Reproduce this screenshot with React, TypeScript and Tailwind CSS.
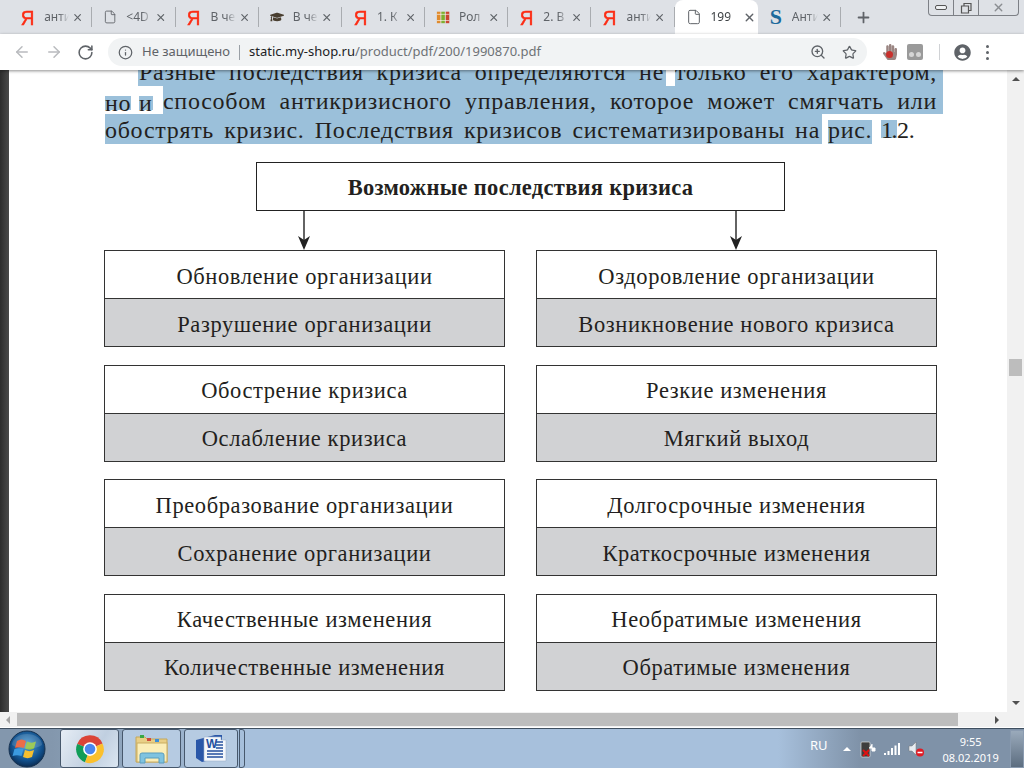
import { ArrowLeft, ArrowRight, RotateCw, Info, ZoomIn, Star, File, X, Plus } from 'lucide-react'
import { FaGraduationCap, FaUserCircle, FaHandPaper } from 'react-icons/fa'

const tabs = [
  { icon: 'ya', label: 'анти' },
  { icon: 'doc', label: '<4D' },
  { icon: 'ya', label: 'В чем' },
  { icon: 'cap', label: 'В чем' },
  { icon: 'ya', label: '1. К' },
  { icon: 'books', label: 'Рол' },
  { icon: 'ya', label: '2. В' },
  { icon: 'ya', label: 'анти' },
  { icon: 'doc', label: '199', active: true },
  { icon: 's', label: 'Анти' },
]

const rows = [
  ['Обновление организации', 'Разрушение организации', 'Оздоровление организации', 'Возникновение нового кризиса'],
  ['Обострение кризиса', 'Ослабление кризиса', 'Резкие изменения', 'Мягкий выход'],
  ['Преобразование организации', 'Сохранение организации', 'Долгосрочные изменения', 'Краткосрочные изменения'],
  ['Качественные изменения', 'Количественные изменения', 'Необратимые изменения', 'Обратимые изменения'],
]

function TabIcon({ kind }: { kind: string }) {
  if (kind === 'ya') return <span className="w-4 text-center text-[21px] leading-none text-[#fc2c14] scale-x-90 [-webkit-text-stroke:0.5px_#fc2c14] [font-family:'Liberation_Sans',sans-serif]">Я</span>
  if (kind === 'doc') return <File className="w-4 h-4 text-[#5f6368]" strokeWidth={1.5} />
  if (kind === 'cap') return <FaGraduationCap className="w-4 h-4 text-[#4a3f30]" />
  if (kind === 's') return <span className="w-4 text-center text-[22px] leading-none font-bold text-[#1d6a9c] [font-family:'Liberation_Serif',serif]">S</span>
  return (
    <svg viewBox="0 0 16 16" className="w-4 h-4">
      <rect x="1" y="2" width="4" height="13" fill="#e08a2c" />
      <rect x="6" y="2" width="4" height="13" fill="#7fae2e" />
      <rect x="11" y="2" width="4" height="13" fill="#c9452f" />
      <path d="M1 5h14M1 12h14" stroke="#fff" strokeOpacity="0.7" />
    </svg>
  )
}

function Tab({ icon, label, active }: { icon: string; label: string; active?: boolean }) {
  return (
    <div className={`w-[83.2px] h-[34px] flex items-center pl-[11px] ${active ? 'bg-white rounded-t-lg text-[#3c4043]' : 'text-[#5f6368]'}`}>
      <TabIcon kind={icon} />
      <span className="ml-[9px] w-[29px] overflow-hidden whitespace-nowrap text-[12px] [mask-image:linear-gradient(to_right,black_60%,transparent)]">{label}</span>
      <X className="w-[13px] h-[13px] ml-[3px] text-[#5f6368]" strokeWidth={2.5} />
      {!active && <div className="ml-[8px] h-[20px] w-px bg-[#a9acb0]" />}
    </div>
  )
}

function Arrow() {
  return (
    <svg viewBox="0 0 12 39" className="w-3 h-[39px]">
      <path d="M6 0V30" stroke="#222" strokeWidth="1.4" />
      <path d="M0 25L6 39L12 25L6 29Z" fill="#222" />
    </svg>
  )
}

function Pair({ top, bottom }: { top: string; bottom: string }) {
  return (
    <div className="w-[401px] border border-[#333] text-[22.5px] tracking-[0.6px] text-[#231f20]">
      <div className="h-[48px] pt-[3px] flex items-center justify-center border-b border-[#333] bg-white">{top}</div>
      <div className="h-[47px] pt-[3px] flex items-center justify-center bg-[#d1d2d4]">{bottom}</div>
    </div>
  )
}

function ChromeLogo() {
  return (
    <svg viewBox="0 0 48 48" className="w-[30px] h-[30px]">
      <path d="M24 24L3.5 16A22 22 0 0 1 44 15Z" fill="#db4437" />
      <path d="M24 24L16 45A22 22 0 0 1 3.5 16Z" fill="#0f9d58" />
      <path d="M24 24L44 15A22 22 0 0 1 16 45Z" fill="#fbc02d" />
      <circle cx="24" cy="24" r="11" fill="#fff" />
      <circle cx="24" cy="24" r="8.5" fill="#4a87ee" />
    </svg>
  )
}

function FolderIcon() {
  return (
    <svg viewBox="0 0 34 30" className="w-[34px] h-[30px]">
      <path d="M1 3h9l2 2h20v23H1Z" fill="#e9cf86" stroke="#c4a75a" />
      <rect x="5" y="1" width="4" height="3" fill="#39a845" />
      <rect x="12" y="4" width="4" height="3" fill="#d04a3a" />
      <rect x="20" y="5" width="4" height="3" fill="#3c8fd9" />
      <rect x="2" y="9" width="30" height="19" fill="#fbeeb8" stroke="#c9ad62" />
      <path d="M5 29V21a2 2 0 0 1 2-2h20a2 2 0 0 1 2 2v8h-5v-5H10v5Z" fill="#7fc3e0" stroke="#5a9dbd" />
    </svg>
  )
}

function WordIcon() {
  return (
    <svg viewBox="0 0 32 30" className="w-8 h-[30px]">
      <path d="M1 6L20 1h7v22l-20 5L1 24Z" fill="#2a57a8" />
      <path d="M9 3h17v3h5v21H9Z" fill="#f4f7fb" stroke="#9fb3cf" strokeWidth="0.6" />
      <text x="11" y="14" fontSize="12" fontWeight="700" fill="#24509e" fontFamily="Liberation Sans, sans-serif">W</text>
      <path d="M21 8h7M21 11h7M21 14h7M12 17h16M12 20h16M12 23h16" stroke="#24509e" strokeWidth="1.6" />
    </svg>
  )
}

function StartOrb() {
  return (
    <svg viewBox="0 0 38 38" className="w-[38px] h-[38px]">
      <defs>
        <radialGradient id="orb" cx="50%" cy="40%" r="60%">
          <stop offset="0%" stopColor="#4fa0d8" />
          <stop offset="70%" stopColor="#11508c" />
          <stop offset="100%" stopColor="#0b2c52" />
        </radialGradient>
      </defs>
      <circle cx="19" cy="19" r="18" fill="url(#orb)" stroke="#16314f" />
      <path d="M9 11c3-2 6-2 9 0l-2 7c-3-1-6-1-9 0Z" fill="#e8562c" />
      <path d="M19 11.500c3 1.500 6 1.500 9 0l-2 7c-3 1.500-6 1.500-9 0Z" fill="#8cc13f" />
      <path d="M6.500 19c3-1 6-1 9 0l-2 7c-3-1-6-1-9 0Z" fill="#3b9ae0" />
      <path d="M17 20c3 1.500 6 1.500 9 0l-2 7c-3 1.500-6 1.500-9 0Z" fill="#f6bf2f" />
      <path d="M4 15A15 11 0 0 1 34 15C26 20 12 20 4 15Z" fill="#fff" fillOpacity="0.14" />
    </svg>
  )
}

function TaskButton({ children, width, active }: { children: React.ReactNode; width: string; active?: boolean }) {
  return (
    <div className={`${width} h-[39px] flex items-center justify-center rounded-[3px] border border-[#47586c] ${active ? 'bg-[linear-gradient(120deg,#e6edf5,#c0cfe0_60%,#dbe6f1)]' : 'bg-[#b6cbe2]'}`}>
      {children}
    </div>
  )
}

const serif = "[font-family:'Liberation_Serif',serif]"

export default function App() {
  return (
    <div className="w-[1024px] h-[768px] overflow-hidden flex flex-col bg-white [font-family:'Noto_Sans',sans-serif]">
      {/* tab strip */}
      <div className="h-[34px] bg-[#dee1e6] flex pl-[9px]">
        {tabs.map((t, i) => <Tab key={i} {...t} />)}
        <Plus className="w-[17px] h-[17px] mt-[9px] ml-[14px] text-[#5f6368]" strokeWidth={2.5} />
        <div className="ml-[56px] flex h-[16px] w-[91px] border border-t-0 border-[#7d8086] rounded-b-[4px] text-[#5f6368]">
          <div className="w-[25px] flex items-center justify-center border-r border-[#7d8086]">
            <span className="w-[12px] h-[5px] rounded-[2px] border border-[#555] bg-[#eef0f2]" />
          </div>
          <div className="w-[25px] flex items-center justify-center border-r border-[#7d8086]">
            <svg viewBox="0 0 12 12" className="w-3 h-3"><path d="M1.500 4h7v7h-7ZM4 4V1.500h7v7H8.500" fill="none" stroke="#555" strokeWidth="1.2" /></svg>
          </div>
          <div className="flex-1 flex items-center justify-center"><X className="w-[13px] h-[13px] text-[#8a8d91]" strokeWidth={2.5} /></div>
        </div>
      </div>

      {/* toolbar */}
      <div className="relative z-10 h-[36px] bg-white flex items-center shadow-[0_1px_3px_rgba(0,0,0,0.45)]">
        <ArrowLeft className="ml-[13px] w-[18px] h-[18px] text-[#b9bbbe]" strokeWidth={2} />
        <ArrowRight className="ml-[14px] w-[18px] h-[18px] text-[#b9bbbe]" strokeWidth={2} />
        <RotateCw className="ml-[14px] w-[17px] h-[17px] text-[#5f6368]" strokeWidth={2.2} />
        <div className="ml-[14px] w-[759px] h-[28px] rounded-full bg-[#f1f3f4] flex items-center text-[13px]">
          <Info className="ml-[10px] w-[15px] h-[15px] text-[#5f6368]" strokeWidth={2} />
          <span className="ml-[9px] text-[#5f6368]">Не защищено</span>
          <span className="mx-[9px] h-[15px] w-px bg-[#9aa0a6]" />
          <span className="text-[#202124]">static.my-shop.ru</span>
          <span className="text-[#6e7276]">/product/pdf/200/1990870.pdf</span>
          <ZoomIn className="ml-auto w-[16px] h-[16px] text-[#5f6368]" strokeWidth={2} />
          <Star className="ml-[16px] mr-[10px] w-[15px] h-[15px] text-[#5f6368]" strokeWidth={2} />
        </div>
        <div className="ml-[15px] relative w-[16px] h-[16px]">
          <FaHandPaper className="w-[16px] h-[16px] text-[#9a8582]" />
          <span className="absolute left-[4px] top-[7px] w-[7px] h-[7px] rounded-full bg-[#c9302c]" />
        </div>
        <div className="ml-[9px] w-[16px] h-[16px] rounded-[2px] bg-[#9a9a9a] flex items-end justify-center gap-[2px] pb-[3px]">
          <span className="w-[5px] h-[5px] rounded-full bg-[#d6d6d6]" />
          <span className="w-[5px] h-[5px] rounded-full bg-[#d6d6d6]" />
        </div>
        <div className="ml-[16px] w-px h-[16px] bg-[#d0d2d5]" />
        <FaUserCircle className="ml-[14px] w-[17px] h-[17px] text-[#5f6368]" />
        <div className="ml-[15px] flex flex-col gap-[3px]">
          <span className="w-[3px] h-[3px] rounded-full bg-[#5f6368]" />
          <span className="w-[3px] h-[3px] rounded-full bg-[#5f6368]" />
          <span className="w-[3px] h-[3px] rounded-full bg-[#5f6368]" />
        </div>
      </div>

      {/* page */}
      <div className="h-[642px] flex overflow-hidden">
        <div className="w-[9px] bg-[linear-gradient(to_right,#2c2c2c,#4a4a4a)]" />
        <div className={`w-[998px] pl-[96px] ${serif} text-[24px] tracking-[0.7px] leading-[29px] text-[#231f20]`}>
          <div className="h-[16px] flex items-end overflow-hidden">
            <div className="ml-[33px] w-[528px] h-[16px] bg-[#9bc0da] flex items-end">
              <div className="w-full pl-px pr-[2px] [text-align-last:justify] whitespace-nowrap leading-[29px] -mb-[1px]">Разные последствия кризиса определяются не</div>
            </div>
            <div className="ml-[9px] w-[268px] h-[16px] pr-[6px] bg-[#9bc0da] flex items-end">
              <div className="w-full [text-align-last:justify] whitespace-nowrap leading-[29px] -mb-[1px]">только его характером,</div>
            </div>
          </div>
          <div className="h-[28px] flex">
            <span className="w-[26px] self-start mt-[10px] h-[14px] bg-[#9bc0da] leading-[14px] whitespace-nowrap">но</span>
            <span className="ml-[8px] w-[14px] self-start mt-[10px] h-[14px] bg-[#9bc0da] leading-[14px] whitespace-nowrap">и</span>
            <div className="ml-[10px] w-[780px] pr-[6px] pt-[2px] leading-[27px] bg-[#9bc0da] [text-align-last:justify] whitespace-nowrap">способом антикризисного управления, которое может смягчать или</div>
          </div>
          <div className="h-[30px] flex">
            <div className="w-[717px] bg-[#9bc0da] pr-[2px] pt-[2px] leading-[28px] [text-align-last:justify] whitespace-nowrap">обострять кризис. Последствия кризисов систематизированы на</div>
            <span className="ml-[6px] w-[44px] mt-[6px] h-[24px] bg-[#9bc0da] leading-[21px] whitespace-nowrap">рис.</span>
            <span className="ml-[9px] w-[16px] mt-[6px] h-[18px] bg-[#9bc0da] leading-[21px] tracking-[-1.5px] whitespace-nowrap">1.</span>
            <span className="mt-[6px] leading-[21px] tracking-[-0.2px] whitespace-nowrap">2.</span>
          </div>

          <div className="mt-[18px] ml-[151px] w-[529px] h-[49px] pt-[1px] border border-[#222] flex items-center justify-center text-[22.5px] tracking-[0.3px] font-bold">
            Возможные последствия кризиса
          </div>
          <div className="flex h-[39px]">
            <div className="ml-[193px]"><Arrow /></div>
            <div className="ml-[420px]"><Arrow /></div>
          </div>

          <div className="flex flex-col gap-[17.67px] -ml-px">
            {rows.map((r, i) => (
              <div key={i} className="flex gap-[31px]">
                <Pair top={r[0]} bottom={r[1]} />
                <Pair top={r[2]} bottom={r[3]} />
              </div>
            ))}
          </div>
        </div>
        <div className="w-[17px] bg-[#f1f1f1] flex flex-col items-center relative">
          <span className="mt-[7px] border-x-[4px] border-x-transparent border-b-[4px] border-b-[#505050]" />
          <div className="mt-[278px] w-[13px] h-[17px] bg-[#bdbdbd]" />
          <span className="mt-auto mb-[7px] border-x-[4px] border-x-transparent border-t-[4px] border-t-[#505050]" />
        </div>
      </div>

      {/* horizontal scrollbar */}
      <div className="h-[16px] bg-[#f1f1f1] flex items-center border-b border-white">
        <span className="ml-[6px] border-y-[4px] border-y-transparent border-r-[4px] border-r-[#a3a3a3]" />
        <div className="ml-[7px] w-[941px] h-[13px] bg-[#bdbdbd]" />
        <span className="ml-[37px] border-y-[4px] border-y-transparent border-l-[4px] border-l-[#505050]" />
      </div>

      {/* taskbar */}
      <div className="flex-1 flex items-center border-t border-[#3f4f60] bg-[linear-gradient(to_right,#8397ad_5%,#a7c0dc_24%,#a7c0dc_76%,#7f92a8_84%)]">
        <div className="ml-[8px]"><StartOrb /></div>
        <div className="ml-[14px] flex gap-[3px] items-center">
          <TaskButton width="w-[59px]" active><ChromeLogo /></TaskButton>
          <TaskButton width="w-[59px]"><FolderIcon /></TaskButton>
          <TaskButton width="w-[54px]"><WordIcon /></TaskButton>
          <div className="-ml-[2px] w-[6px] h-[39px] rounded-r-[3px] border border-[#47586c]" />
        </div>
        <span className="ml-[565px] mb-[5px] text-[13px] text-white">RU</span>
        <span className="ml-[15px] border-x-[4px] border-x-transparent border-b-[4px] border-b-white" />
        <svg viewBox="0 0 16 18" className="ml-[9px] w-4 h-[18px]">
          <rect x="1" y="2" width="9" height="15" rx="1" fill="#3d3d3d" stroke="#ddd" strokeWidth="0.7" />
          <path d="M9 8h3V4M12 8h3v3h-3Z" fill="#fff" stroke="#fff" />
          <path d="M3 10l6 6M9 10l-6 6" stroke="#e01010" strokeWidth="2" />
        </svg>
        <svg viewBox="0 0 16 12" className="ml-[8px] w-4 h-3">
          <path d="M0 10h2v2H0ZM3.500 8h2v4h-2ZM7 5h2v7H7ZM10.500 2.500h2V12h-2ZM14 0h2v12h-2Z" fill="#fff" />
        </svg>
        <svg viewBox="0 0 16 16" className="ml-[8px] w-4 h-4">
          <path d="M1 5h3l4-4v13l-4-4H1Z" fill="#e8edf2" stroke="#777" strokeWidth="0.5" />
          <circle cx="12" cy="11.500" r="4" fill="#e01b24" />
          <path d="M9.500 11.500h5" stroke="#fff" strokeWidth="1.5" />
        </svg>
        <div className="ml-[18px] w-[58px] flex flex-col items-center text-[11px] leading-[16px] text-white mt-[2px]">
          <span>9:55</span>
          <span className="whitespace-nowrap">08.02.2019</span>
        </div>
        <div className="ml-auto h-[38px] w-[14px] border border-[#8a9bb0] bg-[linear-gradient(to_bottom,#9aaabb,#5c6d80)]" />
      </div>
    </div>
  )
}
